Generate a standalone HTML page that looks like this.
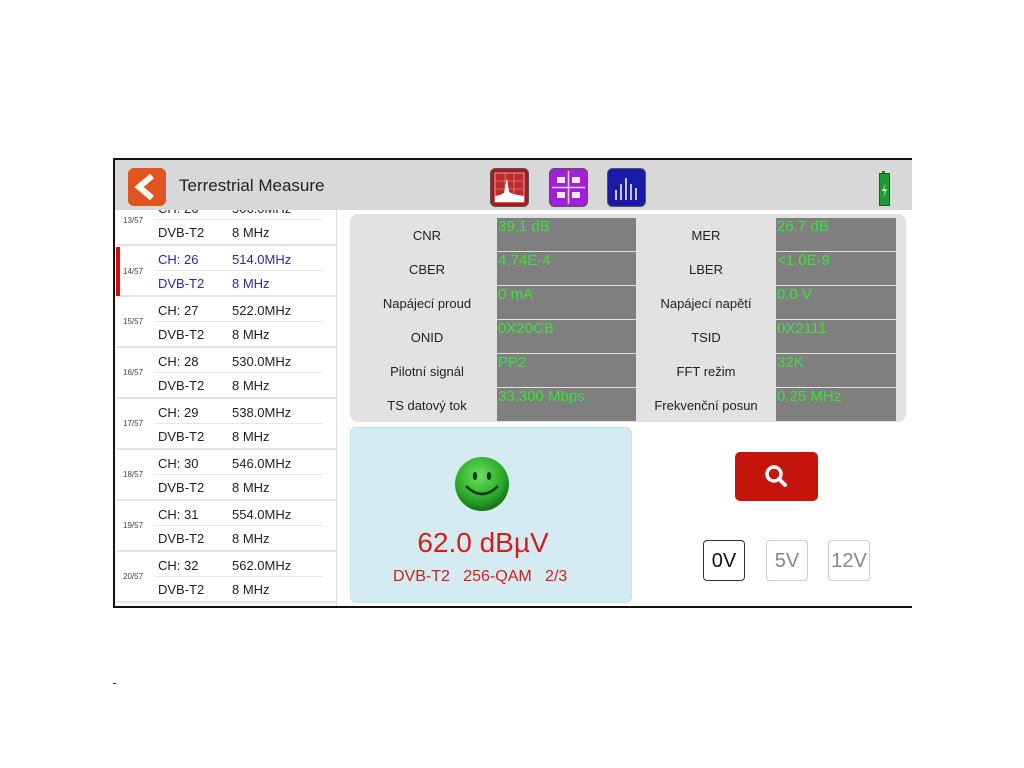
<!DOCTYPE html>
<html><head><meta charset="utf-8"><style>
*{margin:0;padding:0;box-sizing:border-box}
body{width:1024px;height:768px;background:#fff;position:relative;overflow:hidden;font-family:"Liberation Sans",sans-serif}
.a{position:absolute}
.row{position:absolute;left:116px;width:221px;height:51px;border-bottom:2px solid #e4e4e4;font-size:13px;color:#222}
.row .n{position:absolute;left:7px;top:20px;font-size:8px;color:#444}
.row .t{position:absolute;left:42px}
.row .f{position:absolute;left:116px}
.row .l{position:absolute;left:39px;right:14px;top:24px;height:1px;background:#e6e6e6}
.sel{color:#2a2aa0}
.cell{position:absolute;height:33px}
.lab{font-size:13px;color:#222;text-align:center;line-height:33px;padding-top:1px}
.val{background:#7f7f7f;color:#3ce03c;font-size:15px;line-height:18px;padding-left:1px}
.vb{position:absolute;top:540px;width:42px;height:41px;border-radius:4px;font-size:20px;text-align:center;line-height:40px}
</style></head><body>
<div class="row" style="top:195px"><span class="t" style="top:6px">CH: 26</span><span class="f" style="top:6px">506.0MHz</span><div class="l" style="top:24px"></div><span class="n" style="top:21px">13/57</span><span class="t" style="top:30px">DVB-T2</span><span class="f" style="top:30px">8 MHz</span></div>
<div class="row sel" style="top:246px"><span class="n sel" style="top:21px">14/57</span><span class="t" style="top:6px">CH: 26</span><span class="f" style="top:6px">514.0MHz</span><div class="l"></div><span class="t" style="top:30px">DVB-T2</span><span class="f" style="top:30px">8 MHz</span></div>
<div class="a" style="left:116px;top:247px;width:4px;height:49px;background:#d01010"></div>
<div class="row" style="top:297px"><span class="n">15/57</span><span class="t" style="top:6px">CH: 27</span><span class="f" style="top:6px">522.0MHz</span><div class="l"></div><span class="t" style="top:30px">DVB-T2</span><span class="f" style="top:30px">8 MHz</span></div>
<div class="row" style="top:348px"><span class="n">16/57</span><span class="t" style="top:6px">CH: 28</span><span class="f" style="top:6px">530.0MHz</span><div class="l"></div><span class="t" style="top:30px">DVB-T2</span><span class="f" style="top:30px">8 MHz</span></div>
<div class="row" style="top:399px"><span class="n">17/57</span><span class="t" style="top:6px">CH: 29</span><span class="f" style="top:6px">538.0MHz</span><div class="l"></div><span class="t" style="top:30px">DVB-T2</span><span class="f" style="top:30px">8 MHz</span></div>
<div class="row" style="top:450px"><span class="n">18/57</span><span class="t" style="top:6px">CH: 30</span><span class="f" style="top:6px">546.0MHz</span><div class="l"></div><span class="t" style="top:30px">DVB-T2</span><span class="f" style="top:30px">8 MHz</span></div>
<div class="row" style="top:501px"><span class="n">19/57</span><span class="t" style="top:6px">CH: 31</span><span class="f" style="top:6px">554.0MHz</span><div class="l"></div><span class="t" style="top:30px">DVB-T2</span><span class="f" style="top:30px">8 MHz</span></div>
<div class="row" style="top:552px"><span class="n">20/57</span><span class="t" style="top:6px">CH: 32</span><span class="f" style="top:6px">562.0MHz</span><div class="l"></div><span class="t" style="top:30px">DVB-T2</span><span class="f" style="top:30px">8 MHz</span></div>
<div class="a" style="left:336px;top:210px;width:1px;height:396px;background:#ddd"></div>

<div class="a" style="left:115px;top:160px;width:797px;height:50px;background:#d8d8d8"></div>
<div class="a" style="left:113px;top:158px;width:799px;height:2px;background:#111"></div>
<div class="a" style="left:113px;top:158px;width:2px;height:450px;background:#111"></div>
<div class="a" style="left:113px;top:606px;width:799px;height:2px;background:#111"></div>
<div class="a" style="left:113px;top:683px;width:3px;height:1px;background:#333"></div>
<div class="a" style="left:128px;top:168px;width:38px;height:38px;border-radius:6px;background:#e0541e"></div>
<svg class="a" style="left:128px;top:168px" width="38" height="38"><path d="M24 8 L11 19 L24 30" stroke="#fff" stroke-width="6" fill="none" stroke-linejoin="miter"/></svg>
<div class="a" style="left:179px;top:176px;font-size:17px;color:#222">Terrestrial Measure</div>
<svg class="a" style="left:490px;top:168px" width="39" height="39"><rect x="0.5" y="0.5" width="38" height="38" rx="5" fill="#a81a22" stroke="#555"/><rect x="5" y="5" width="29" height="29" fill="#c02a2e" stroke="#f0c0c0" stroke-width="0.8"/><path d="M5 13h29M5 21h29M15 5v29M24 5v29" stroke="#e8a0a0" stroke-width="0.6"/><path d="M5 34 L5 28 L10 27 L14 25 L17 10 L19 24 L23 26 L28 27 L34 28 L34 34Z" fill="#fff"/></svg>
<svg class="a" style="left:549px;top:168px" width="39" height="39"><rect x="0.5" y="0.5" width="38" height="38" rx="5" fill="#a020d8" stroke="#555"/><path d="M19.5 3v33M3 19.5h33" stroke="#f0d0ff" stroke-width="1.5"/><rect x="8" y="9" width="8" height="6" fill="#f8e8ff"/><rect x="23" y="9" width="8" height="6" fill="#f8e8ff"/><rect x="8" y="24" width="8" height="6" fill="#f8e8ff"/><rect x="23" y="24" width="8" height="6" fill="#f8e8ff"/></svg>
<svg class="a" style="left:607px;top:168px" width="39" height="39"><rect x="0.5" y="0.5" width="38" height="38" rx="5" fill="#1a1aa8" stroke="#555"/><path d="M9 32v-10M14 32v-16M19 32v-22M24 32v-16M29 32v-12" stroke="#fff" stroke-width="1.5"/></svg>
<div class="a" style="left:882px;top:171px;width:3px;height:3px;background:#1e8a2e"></div>
<div class="a" style="left:879px;top:173px;width:11px;height:33px;background:#1e9a34;border:1px solid #146024"></div>
<svg class="a" style="left:879px;top:173px" width="11" height="33"><path d="M7 10 L3 18 L6 18 L4 25 L8 16 L5 16 Z" fill="#d0ffd0"/></svg>

<div class="a" style="left:350px;top:214px;width:556px;height:208px;background:#e2e2e2;border-radius:8px"></div>
<div class="a" style="left:357px;top:218px;width:540px;height:201px">
<div class="cell lab" style="left:0;top:0;width:140px">CNR</div><div class="cell val" style="left:140px;top:0;width:139px">39.1 dB</div><div class="cell lab" style="left:279px;top:0;width:140px">MER</div><div class="cell val" style="left:419px;top:0;width:120px">26.7 dB</div>
<div class="cell lab" style="left:0;top:34px;width:140px">CBER</div><div class="cell val" style="left:140px;top:34px;width:139px">4.74E-4</div><div class="cell lab" style="left:279px;top:34px;width:140px">LBER</div><div class="cell val" style="left:419px;top:34px;width:120px">&lt;1.0E-9</div>
<div class="cell lab" style="left:0;top:68px;width:140px">Napájecí proud</div><div class="cell val" style="left:140px;top:68px;width:139px">0 mA</div><div class="cell lab" style="left:279px;top:68px;width:140px">Napájecí napětí</div><div class="cell val" style="left:419px;top:68px;width:120px">0.0 V</div>
<div class="cell lab" style="left:0;top:102px;width:140px">ONID</div><div class="cell val" style="left:140px;top:102px;width:139px">0X20CB</div><div class="cell lab" style="left:279px;top:102px;width:140px">TSID</div><div class="cell val" style="left:419px;top:102px;width:120px">0X2111</div>
<div class="cell lab" style="left:0;top:136px;width:140px">Pilotní signál</div><div class="cell val" style="left:140px;top:136px;width:139px">PP2</div><div class="cell lab" style="left:279px;top:136px;width:140px">FFT režim</div><div class="cell val" style="left:419px;top:136px;width:120px">32K</div>
<div class="cell lab" style="left:0;top:170px;width:140px">TS datový tok</div><div class="cell val" style="left:140px;top:170px;width:139px">33.300 Mbps</div><div class="cell lab" style="left:279px;top:170px;width:140px">Frekvenční posun</div><div class="cell val" style="left:419px;top:170px;width:120px">0.25 MHz</div>
</div>

<div class="a" style="left:350px;top:427px;width:282px;height:176px;background:#d5ebf2;border-radius:6px;border:1px solid #c8e0ea"></div>
<svg class="a" style="left:454px;top:456px" width="58" height="58"><defs><radialGradient id="g" cx="0.45" cy="0.35" r="0.65"><stop offset="0" stop-color="#6be05a"/><stop offset="0.7" stop-color="#2aa82a"/><stop offset="1" stop-color="#137013"/></radialGradient></defs><circle cx="28" cy="28" r="27" fill="url(#g)"/><ellipse cx="21" cy="20" rx="2.2" ry="4" fill="#0c3a0c"/><ellipse cx="35" cy="20" rx="2.2" ry="4" fill="#0c3a0c"/><path d="M12 30 Q28 46 44 30" stroke="#0c3a0c" stroke-width="2.5" fill="none"/></svg>
<div class="a" style="left:350px;top:527px;width:266px;text-align:center;font-size:28px;color:#d41e1e">62.0 dBµV</div>
<div class="a" style="left:393px;top:568px;font-size:16px;color:#d41e1e;white-space:pre">DVB-T2   256-QAM   2/3</div>

<div class="a" style="left:735px;top:452px;width:83px;height:49px;background:#c4140c;border-radius:5px"></div>
<svg class="a" style="left:735px;top:452px" width="83" height="49"><circle cx="39" cy="22" r="7" stroke="#fff" stroke-width="3.5" fill="none"/><path d="M44 27 L50 33" stroke="#fff" stroke-width="4" stroke-linecap="round"/></svg>
<div class="vb" style="left:703px;border:1.5px solid #333;color:#111">0V</div>
<div class="vb" style="left:766px;border:1px solid #ccc;color:#888">5V</div>
<div class="vb" style="left:828px;border:1px solid #ccc;color:#888">12V</div>
</body></html>
